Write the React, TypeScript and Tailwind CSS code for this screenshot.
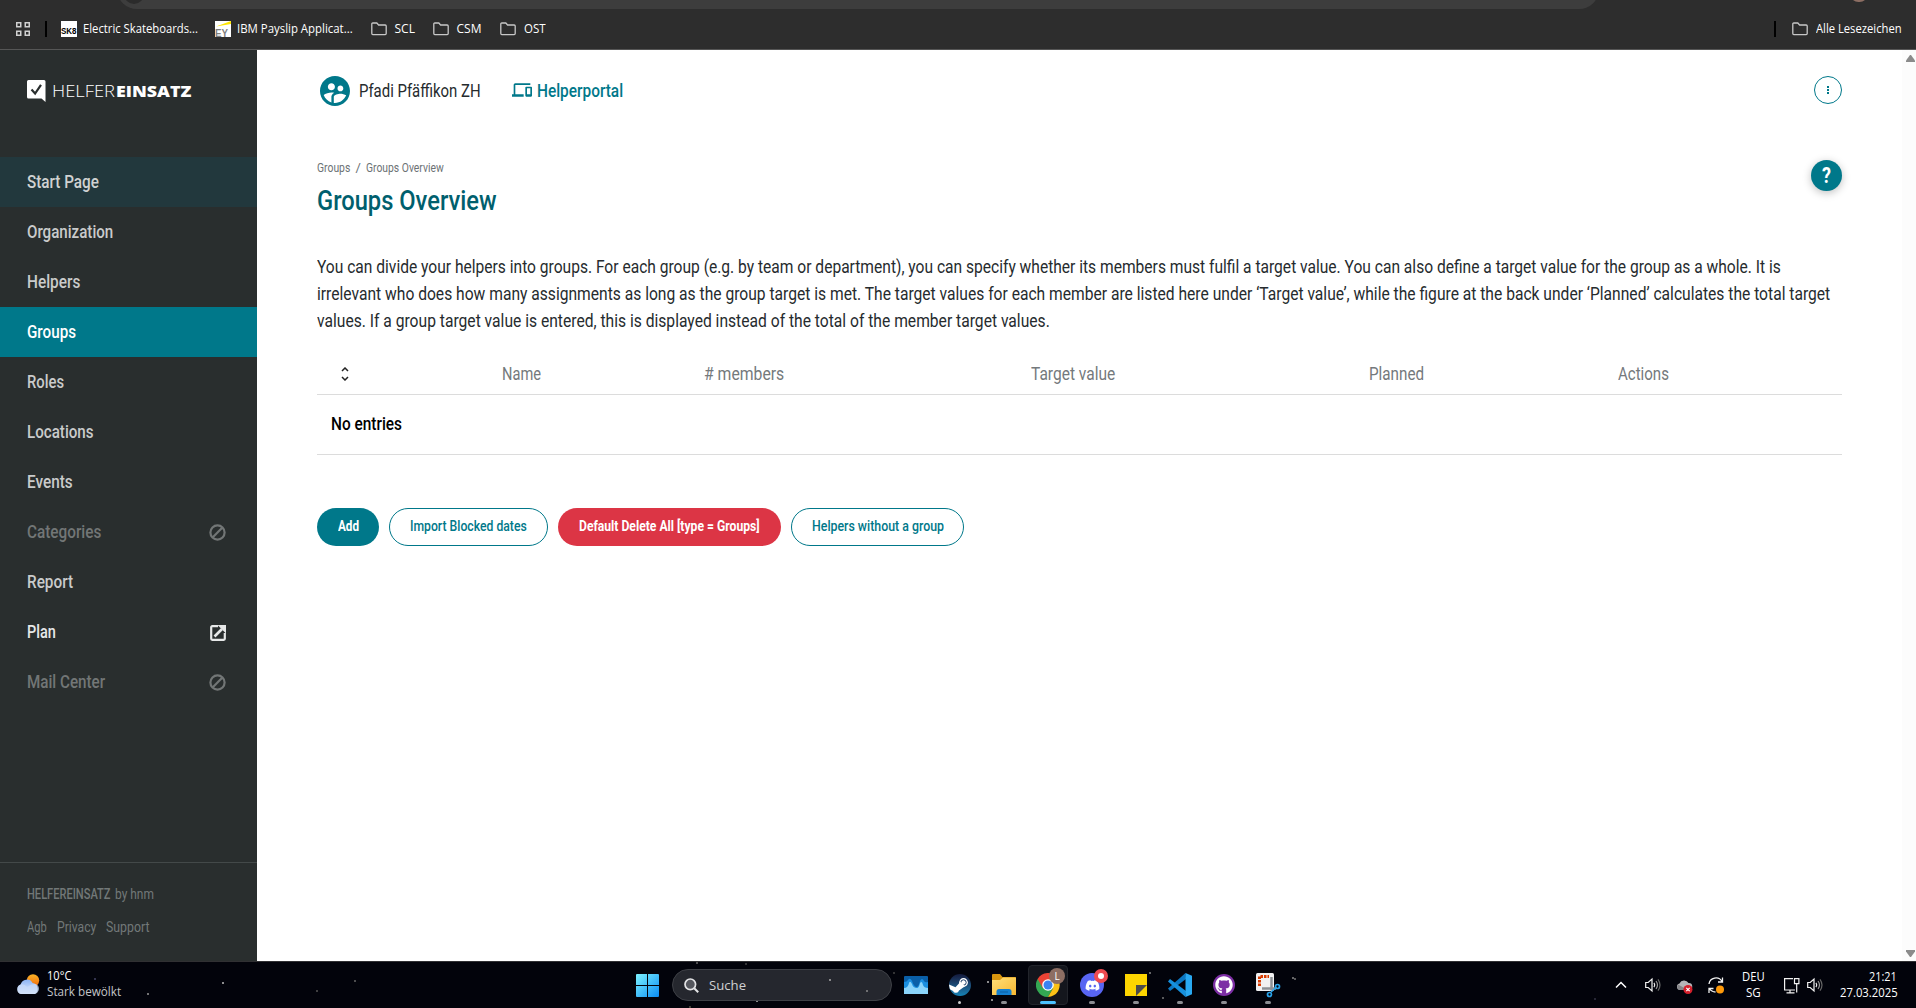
import { useLayoutEffect, useRef, useState, type ReactNode } from "react";
import { MdOutlineDevices, MdSupervisedUserCircle } from "react-icons/md";
import { FaDiscord, FaGithub } from "react-icons/fa6";

/* Condensed text: stretches its content horizontally to the given width. */
function Fit({ w, className = "", children }: { w: number; className?: string; children: ReactNode }) {
  const ref = useRef<HTMLSpanElement>(null);
  const [scale, setScale] = useState(1);
  useLayoutEffect(() => {
    if (ref.current) setScale(w / ref.current.offsetWidth);
  }, [w]);
  return (
    <span className={"block shrink-0 whitespace-nowrap " + className} style={{ width: w }}>
      <span ref={ref} className="inline-block origin-left whitespace-nowrap" style={{ transform: `scaleX(${scale})` }}>
        {children}
      </span>
    </span>
  );
}

function Folder() {
  return (
    <svg width="16" height="14" viewBox="0 0 16 14" fill="none" stroke="#c7c7c7" strokeWidth="1.3" className="shrink-0">
      <path d="M.8 11.6V2a1 1 0 0 1 1-1h4l1.8 2h6.6a1 1 0 0 1 1 1v7.6a1 1 0 0 1-1 1H1.8a1 1 0 0 1-1-1z" />
    </svg>
  );
}

function BrowserBar() {
  return (
    <header className="relative flex h-[50px] items-start overflow-hidden border-b border-[#565656] bg-[#2d2d2d] pt-[20px] font-['Open_Sans','Noto_Sans',sans-serif] text-[12px] leading-[18px] text-white">
      <div className="absolute -top-8 left-[117px] h-[41px] w-[1482px] rounded-[20px] bg-[#3d3d3d]" />
      <div className="absolute -top-4 left-[124px] h-[20px] w-[20px] rounded-full bg-[#2b2b2b]" />
      <div className="absolute -top-[15px] left-[1850px] h-[17px] w-[18px] rounded-full bg-[#8d6e63]" />
      <div className="flex h-[18px] w-full items-center pl-4">
        <svg width="14" height="14" viewBox="0 0 14 14" fill="none" stroke="#d0d0d0" strokeWidth="1.5">
          <rect x=".75" y=".75" width="4" height="4" />
          <rect x="9.25" y=".75" width="4" height="4" />
          <rect x=".75" y="9.25" width="4" height="4" />
          <rect x="9.25" y="9.25" width="4" height="4" />
        </svg>
        <div className="ml-[15px] h-4 w-[2px] bg-black" />
        <div className="ml-[14px] flex h-4 w-4 items-center justify-center overflow-hidden bg-white font-['Liberation_Sans',sans-serif] text-[9px] font-bold leading-4 text-black">
          <Fit w={16} className="pt-1 font-black">SK8</Fit>
        </div>
        <Fit w={114.5} className="ml-[6px]">Electric Skateboards...</Fit>
        <div className="relative ml-[17px] h-4 w-4 shrink-0 bg-white">
          <svg width="16" height="16" viewBox="0 0 16 16">
            <path d="M1 5.5 16 0v3z" fill="#ffe600" />
            <text x="0" y="15.5" fontSize="10.5" fontWeight="700" textLength="13" lengthAdjust="spacingAndGlyphs" fill="#808080" fontFamily="Liberation Sans">EY</text>
          </svg>
        </div>
        <Fit w={116} className="ml-[6px]">IBM Payslip Applicat...</Fit>
        <div className="ml-[18px]"><Folder /></div>
        <Fit w={20} className="ml-2">SCL</Fit>
        <div className="ml-[18px]"><Folder /></div>
        <Fit w={25} className="ml-2">CSM</Fit>
        <div className="ml-[18px]"><Folder /></div>
        <Fit w={22} className="ml-2">OST</Fit>
        <div className="ml-auto h-4 w-[2px] bg-black" />
        <div className="ml-4"><Folder /></div>
        <Fit w={86} className="ml-2 mr-[14px]">Alle Lesezeichen</Fit>
      </div>
    </header>
  );
}

type Item = { label: string; w: number; state?: "hover" | "active" | "disabled" | "external" };
const items: Item[] = [
  { label: "Start Page", w: 72, state: "hover" },
  { label: "Organization", w: 86.5 },
  { label: "Helpers", w: 53 },
  { label: "Groups", w: 49, state: "active" },
  { label: "Roles", w: 37 },
  { label: "Locations", w: 66.5 },
  { label: "Events", w: 46 },
  { label: "Categories", w: 74, state: "disabled" },
  { label: "Report", w: 46 },
  { label: "Plan", w: 29, state: "external" },
  { label: "Mail Center", w: 78.5, state: "disabled" },
];

function Sidebar() {
  const tone = (s?: string) =>
    s === "hover"
      ? "bg-[#22383d] text-[#d0d2d2]"
      : s === "active"
        ? "bg-[#00788a] text-white"
        : s === "disabled"
          ? "text-[#727676]"
          : s === "external"
            ? "text-[#e6e8e8]"
            : "text-[#c9cbcb]";
  return (
    <aside className="flex w-[257px] shrink-0 flex-col bg-[#292e2e] font-medium">
      <div className="flex h-[107px] items-start pl-[27px] pt-[30px] text-white">
        <svg width="19" height="22" viewBox="0 0 19 22" className="shrink-0">
          <path d="M1.5 0H17a1.5 1.5 0 0 1 1.5 1.5V22l-4-3.5h-13A1.5 1.5 0 0 1 0 17V1.5A1.5 1.5 0 0 1 1.5 0z" fill="#fff" />
          <path d="m4.500 9.500 3.600 4L14 4.800" fill="none" stroke="#292e2e" strokeWidth="2.200" />
        </svg>
        <div className="flex pl-[6px] font-['Open_Sans',sans-serif] text-[16px] leading-[22px]">
          <Fit w={63} className="font-light">HELFER</Fit>
          <Fit w={75.5} className="ml-px font-extrabold">EINSATZ</Fit>
        </div>
      </div>
      <nav>
        {items.map((i) => (
          <div key={i.label} className={"flex h-[50px] items-center justify-between pl-[27px] pr-[31px] text-[18px] " + tone(i.state)}>
            <Fit w={i.w} className="pb-[2px]">{i.label}</Fit>
            {i.state === "disabled" && (
              <svg width="17" height="17" viewBox="0 0 17 17" fill="none" stroke="currentColor" strokeWidth="2.2" className="mt-px">
                <circle cx="8.5" cy="8.5" r="7.1" />
                <path d="m3.8 13.2 9.4-9.4" />
              </svg>
            )}
            {i.state === "external" && (
              <svg width="16" height="16" viewBox="0 0 16 16" fill="none" stroke="currentColor" className="mt-px">
                <path d="M8 1.200H2.200a1 1 0 0 0-1 1v11.600a1 1 0 0 0 1 1h11.600a1 1 0 0 0 1-1V8" strokeWidth="2.200" />
                <path d="M4.500 11.500 12 4" strokeWidth="2.600" />
                <path d="M7.500 0H16v8.500z" fill="currentColor" stroke="none" />
              </svg>
            )}
          </div>
        ))}
      </nav>
      <div className="mt-auto flex h-[99px] flex-col gap-[13px] border-t border-[#434949] pl-[27px] pt-[21px] text-[15px] leading-5 text-[#727878]">
        <div className="flex gap-1">
          <Fit w={83.5}>HELFEREINSATZ</Fit>
          <Fit w={39} className="font-normal">by hnm</Fit>
        </div>
        <div className="flex gap-[10px] font-normal">
          <Fit w={20}>Agb</Fit>
          <Fit w={39}>Privacy</Fit>
          <Fit w={43.5}>Support</Fit>
        </div>
      </div>
    </aside>
  );
}

function Main() {
  return (
    <main className="min-w-0 flex-1 bg-white pl-[60px] pr-[60px] text-[18px] text-[#262b2e]">
      <div className="flex h-[82px] items-center">
        <MdSupervisedUserCircle className="size-[36px] shrink-0 text-[#00788a]" />
        <Fit w={122} className="ml-[6px] pb-[2px]">Pfadi Pfäffikon ZH</Fit>
        <div className="ml-[31px] flex items-center pb-[2px] text-[#00788a]">
          <MdOutlineDevices className="size-[20px] shrink-0" />
          <Fit w={86.5} className="ml-[5px] font-medium">Helperportal</Fit>
        </div>
        <div className="mb-[2px] ml-auto flex size-7 flex-col items-center justify-center gap-[1px] rounded-full border border-[#00788a]">
          <i className="size-[2px] bg-[#00788a]" />
          <i className="size-[2px] bg-[#00788a]" />
          <i className="size-[2px] bg-[#00788a]" />
        </div>
      </div>
      <div className="flex h-[116px] justify-between pt-[26px]">
        <div>
          <div className="flex gap-[5px] text-[13px] leading-5 text-[#6c7275]">
            <Fit w={33.5}>Groups</Fit>
            <Fit w={5}>/</Fit>
            <Fit w={78}>Groups Overview</Fit>
          </div>
          <Fit w={180} className="mt-[6px] text-[27px] font-medium leading-[34px] text-[#005f6e]">Groups Overview</Fit>
        </div>
        <div className="mt-[2px] flex size-[31px] items-center justify-center rounded-full bg-[#00788a] text-[22px] font-bold leading-none text-white shadow-[0_2px_8px_rgba(0,0,0,0.25)]">
          <Fit w={9}>?</Fit>
        </div>
      </div>
      <div className="pt-[5px] leading-[27px]">
        <Fit w={1464}>You can divide your helpers into groups. For each group (e.g. by team or department), you can specify whether its members must fulfil a target value. You can also define a target value for the group as a whole. It is</Fit>
        <Fit w={1513}>irrelevant who does how many assignments as long as the group target is met. The target values for each member are listed here under ‘Target value’, while the figure at the back under ‘Planned’ calculates the total target</Fit>
        <Fit w={733}>values. If a group target value is entered, this is displayed instead of the total of the member target values.</Fit>
      </div>
      <div className="mt-[20px] grid h-[41px] w-[1525px] grid-cols-[56px_297px_149px_508px_139px_355px] items-center justify-items-center border-b border-[#dcdcdc] text-[#74797c]">
        <svg width="8" height="14" viewBox="0 0 8 14" fill="none" stroke="#222" strokeWidth="1.5">
          <path d="M1 4 4 1l3 3M1 10l3 3 3-3" />
        </svg>
        <Fit w={39} className="pb-[2px]">Name</Fit>
        <Fit w={80.5} className="pb-[2px]">#&nbsp;members</Fit>
        <Fit w={84.5} className="pb-[2px]">Target value</Fit>
        <Fit w={55} className="pb-[2px]">Planned</Fit>
        <Fit w={51} className="pb-[2px]">Actions</Fit>
      </div>
      <div className="flex h-[60px] w-[1525px] items-center border-b border-[#dcdcdc] pb-[2px] pl-[14px] font-medium text-black">
        <Fit w={71}>No entries</Fit>
      </div>
      <div className="mt-[53px] flex gap-[10px] text-[14.5px] font-medium text-[#00788a]">
        <button className="flex h-[38px] w-[62px] items-center justify-center rounded-full bg-[#00788a] font-bold text-white"><Fit w={21}>Add</Fit></button>
        <button className="flex h-[38px] w-[159px] items-center justify-center rounded-full border border-[#00788a]"><Fit w={117}>Import Blocked dates</Fit></button>
        <button className="flex h-[38px] w-[223px] items-center justify-center rounded-full bg-[#dc3545] font-bold text-white"><Fit w={181}>Default Delete All [type = Groups]</Fit></button>
        <button className="flex h-[38px] w-[173px] items-center justify-center rounded-full border border-[#00788a]"><Fit w={132}>Helpers without a group</Fit></button>
      </div>
    </main>
  );
}

function Scrollbar() {
  return (
    <div className="flex w-[14px] shrink-0 flex-col items-center justify-between bg-[#fcfcfc] pb-1 pl-[2px] pt-[5px]">
      <svg width="9" height="7" viewBox="0 0 9 7"><path d="M4 0h1l4 5.500V7H0V5.500z" fill="#8b8b8b" /></svg>
      <svg width="9" height="7" viewBox="0 0 9 7"><path d="M4 7h1l4-5.500V0H0v1.500z" fill="#8b8b8b" /></svg>
    </div>
  );
}

const stars: [number, number, string][] = [
  [147, 31, "#999"], [222, 20, "#bbb"], [94, 16, "#446"], [316, 28, "#555"], [354, 18, "#666"],
  [696, 0, "#666"], [745, 1, "#444"], [756, 38, "#bbb"], [893, 10, "#444"],
  [987, 19, "#bbb"], [991, 37, "#bbb"], [1149, 10, "#888"], [1162, 35, "#777"], [1292, 15, "#888"], [1294, 16, "#777"], [1594, 36, "#334"], [689, 44, "#554"],
];

function Speaker() {
  return (
    <svg width="16" height="16" viewBox="0 0 16 16" fill="none" stroke="#f2f2f2" strokeWidth="1.200">
      <path d="M.7 5.500h2.500L7 2v12l-3.800-3.500H.7z" />
      <path d="M9 5.800q1.500 2.200 0 4.400" />
      <path d="M11 4q3 4 0 8" stroke="#9a9a9a" />
      <path d="M13 2.300q4 5.700 0 11.400" stroke="#666" />
    </svg>
  );
}

function TaskIcon({ children, run, active }: { children: ReactNode; run?: boolean; active?: boolean }) {
  return (
    <div className={"relative flex h-10 w-10 items-center justify-center rounded " + (active ? "border border-[#22242b] bg-[#14161d]" : "")}>
      {children}
      {run && <i className="absolute bottom-[1px] left-[17px] h-[3px] w-[6px] rounded-full bg-[#8b8d92]" />}
      {active && <i className="absolute bottom-0 left-[11px] h-[3px] w-4 rounded-full bg-[#4cc2ff]" />}
    </div>
  );
}

function Taskbar() {
  return (
    <footer className="relative flex h-[47px] items-start border-t border-[#303033] bg-[#02030b] font-['Open_Sans','Noto_Sans',sans-serif] text-[12px] text-white">
      {stars.map(([x, y, c]) => (
        <i key={`${x}-${y}`} className="absolute size-[2px] rounded-full" style={{ left: x, top: y, background: c }} />
      ))}
      <div className="flex w-[636px] items-center pl-4 pt-[7px]">
        <svg width="24" height="21" viewBox="0 0 24 21">
          <defs>
            <linearGradient id="cl" x1="0" y1="0" x2="0" y2="1"><stop offset="0" stopColor="#8db4f4" /><stop offset="1" stopColor="#e6effd" /></linearGradient>
            <linearGradient id="sun" x1="0" y1="0" x2="0" y2="1"><stop offset="0" stopColor="#fbb325" /><stop offset="1" stopColor="#f0690f" /></linearGradient>
          </defs>
          <circle cx="17" cy="6.500" r="6.200" fill="url(#sun)" />
          <path d="M5 20a5 5 0 0 1-.4-9.500 6.500 6.500 0 0 1 12-1.500A6 6 0 0 1 19 20z" fill="url(#cl)" />
          <path d="M5 20a5 5 0 0 1-.4-9.500q4-.8 6.500 2.500Q18 8 22 11.500A5.600 5.600 0 0 1 19 20z" fill="#c9dbfa" opacity=".7" />
        </svg>
        <div className="-mt-px ml-[7px] leading-4">
          <Fit w={24}>10°C</Fit>
          <Fit w={74} className="text-[#c4c5c8]">Stark bewölkt</Fit>
        </div>
      </div>
      <svg width="23" height="23" viewBox="0 0 23 23" className="mt-3">
        <defs><linearGradient id="win" x1="0" y1="0" x2="1" y2="1"><stop offset="0" stopColor="#7df3ff" /><stop offset="1" stopColor="#0a8cf5" /></linearGradient></defs>
        <path d="M0 1q0-1 1-1h10v11H0zM12 0h10q1 0 1 1v10H12zM0 12h11v11H1q-1 0-1-1zM12 12h11v10q0 1-1 1H12z" fill="url(#win)" />
      </svg>
      <div className="relative ml-[13px] mt-[7px] flex h-8 w-[220px] items-center rounded-full border border-[#3e4046] bg-[#25272e] pl-[11px] text-[13.5px] text-[#d0d1d3]">
        <svg width="15" height="15" viewBox="0 0 15 15" fill="none" stroke="#e4e4e6"><circle cx="6.300" cy="6.300" r="5.300" strokeWidth="1.700" fill="#55575e" /><path d="m10.200 10.200 4 4" strokeWidth="2" /></svg>
        <Fit w={37} className="ml-[10px]">Suche</Fit>
        <i className="absolute left-[156px] top-[9px] size-[2px] rounded-full bg-[#aaa]" />
        <i className="absolute left-[193px] top-[20px] size-[2px] rounded-full bg-[#888]" />
      </div>
      <div className="ml-1 mt-[3px] flex gap-1">
        <TaskIcon>
          <svg width="24" height="18" viewBox="0 0 24 18">
            <rect width="24" height="18" rx="1" fill="#0a5fa8" />
            <path d="M0 6q3 0 4-2 2-3 4 1 2 6 5 6 2-1 3-6 2-4 4 0 1 2 4 1v12H0z" fill="#1b8fe0" />
            <path d="M0 12q4 0 5-5 1-3 3 1 1 4 5 4 2 0 3-5 2-3 3 2 1 3 5 3v6H0z" fill="#8ad4fb" />
          </svg>
        </TaskIcon>
      </div>
      <div className="ml-1 mt-[3px] flex gap-1">
        <TaskIcon>
          <div className="flex size-[22px] items-center justify-center overflow-hidden rounded-full bg-linear-to-b from-[#131a3c] to-[#1283b7]">
            <svg width="22" height="22" viewBox="0 0 22 22">
              <circle cx="14.500" cy="8.500" r="4.400" fill="#fff" /><circle cx="14.500" cy="8.500" r="2.700" fill="none" stroke="#1b3c66" strokeWidth="1" />
              <path d="m0 10.500 6.500 2.800 5-5.500 4.500 4.500-6 4.200a3.200 3.200 0 0 1-6 .5L.5 15z" fill="#fff" />
            </svg>
          </div>
          <i className="absolute bottom-[1px] left-[18px] size-[3px] rounded-full bg-[#ccc]" />
        </TaskIcon>
        <TaskIcon run>
          <svg width="24" height="22" viewBox="0 0 24 22">
            <defs><linearGradient id="fo" x1="0" y1="0" x2="1" y2="1"><stop offset="0" stopColor="#ffe07a" /><stop offset="1" stopColor="#f7b731" /></linearGradient></defs>
            <path d="M0 1q0-1 1-1h7l2.500 3H23q1 0 1 1v4H0z" fill="#d9960f" />
            <path d="M0 6h8l3-2.500h13V21H0z" fill="url(#fo)" />
            <path d="M4.500 21v-3.500q0-2.500 2.500-2.500h10q2.500 0 2.500 2.500V21z" fill="#1480d0" /><path d="M8 18h8" stroke="#0b5ea3" strokeWidth="1" />
          </svg>
        </TaskIcon>
        <TaskIcon active>
          <svg width="24" height="24" viewBox="0 0 24 24">
            <path d="M12 12 1.600 6A12 12 0 0 1 22.400 6z" fill="#ea4335" />
            <path d="M12 12 1.600 6A12 12 0 0 0 12 24l5.200-9z" fill="#34a853" />
            <path d="m17.200 15-5.200 9A12 12 0 0 0 22.400 6.500H12z" fill="#fbc116" />
            <path d="M1.600 6 6.800 15 12 6.500h10.300L22 5.500z" fill="#ea4335" />
            <circle cx="12" cy="12" r="5.800" fill="#fff" /><circle cx="12" cy="12" r="4.500" fill="#3b82f0" />
          </svg>
          <div className="absolute left-[20px] top-[2px] flex size-4 items-center justify-center rounded-full bg-[#8d6e63] text-[10px] leading-none text-white">L</div>
        </TaskIcon>
        <TaskIcon run>
          <div className="flex size-6 items-center justify-center rounded-full bg-[#5865f2]"><FaDiscord className="size-[15px]" /></div>
          <div className="absolute left-[22px] top-[4px] flex size-[14px] items-center justify-center rounded-full bg-[#f04b50]"><i className="size-[6px] rounded-full bg-white" /></div>
        </TaskIcon>
        <TaskIcon run>
          <svg width="22" height="22" viewBox="0 0 22 22"><path d="M0 0h22v22H0z" fill="#fdd500" /><path d="M11 11h11L11 22z" fill="#4b4b4b" /></svg>
        </TaskIcon>
        <TaskIcon run>
          <svg width="24" height="24" viewBox="0 0 24 24">
            <path d="M17.500 0 0 15.500l2 2.500L18 6z" fill="#0b77c2" />
            <path d="M17.500 24 0 8.500 2 6l16 12z" fill="#1690dd" />
            <path d="M17.500 0 24 2.800v18.400L17.500 24z" fill="#29a9f2" />
          </svg>
        </TaskIcon>
        <TaskIcon run>
          <div className="flex size-[22px] items-center justify-center rounded-full bg-[#7d2fa5]"><FaGithub className="size-[18px]" /></div>
        </TaskIcon>
        <TaskIcon run>
          <svg width="24" height="24" viewBox="0 0 24 24" className="overflow-visible">
            <rect width="18" height="18" rx="1.500" fill="#f1f1f2" />
            <path d="M3.500 13V3.500H13" fill="none" stroke="#d83b01" strokeWidth="3" strokeDasharray="2.500 1" />
            <path d="M15.500 4v13.500M6 15.500h14" stroke="#8d9196" strokeWidth="2.500" fill="none" />
            <circle cx="21.500" cy="13.500" r="2" fill="none" stroke="#29a3ea" strokeWidth="1.700" /><circle cx="13.500" cy="21.500" r="2" fill="none" stroke="#29a3ea" strokeWidth="1.700" />
            <path d="m15 19 4.500-4" stroke="#29a3ea" strokeWidth="1.500" />
          </svg>
        </TaskIcon>
      </div>
      <div className="ml-auto flex h-[46px] items-center pr-[19px] leading-4">
        <svg width="12" height="8" viewBox="0 0 12 8" fill="none" stroke="#fff" strokeWidth="1.500" className="mr-[18px]"><path d="m1 6.500 5-5 5 5" /></svg>
        <Speaker />
        <svg width="17" height="16" viewBox="0 0 17 16" className="ml-[15px] mt-px">
          <path d="M4 12a3.300 3.300 0 0 1-.5-6.500A5 5 0 0 1 12.500 5 3.500 3.500 0 0 1 13 12z" fill="#b5b5b8" />
          <path d="M2 6.500 12 12H4a3.500 3.500 0 0 1-2-5.500z" fill="#858589" />
          <circle cx="12" cy="11.500" r="4.500" fill="#d5202c" /><path d="m10.300 9.800 3.400 3.400m0-3.400-3.400 3.400" stroke="#fff" strokeWidth="1.200" />
        </svg>
        <svg width="16" height="17" viewBox="0 0 16 17" className="ml-[15px]" fill="none" stroke="#f2f2f2" strokeWidth="1.300">
          <path d="M1 7a7 7 0 0 1 13-2.500M14.500.5v4.500H10M7.500 15A7 7 0 0 1 1.500 11.500M1 16v-4.500h4.500" />
          <circle cx="12" cy="12.500" r="4" fill="#ff9a0a" stroke="none" />
        </svg>
        <div className="ml-[18px] flex w-[24px] flex-col items-center">
          <Fit w={22.5}>DEU</Fit>
          <Fit w={14.5}>SG</Fit>
        </div>
        <svg width="17" height="17" viewBox="0 0 17 17" className="ml-[17px]" fill="none" stroke="#f2f2f2" strokeWidth="1.200">
          <path d="M10 1.600H1.600v11.400H12M7 13v2.500M3.500 15.800h8" /><path d="M11.500 1.600h4.400v5h-4.400zM13.700 6.600v9" />
        </svg>
        <div className="ml-[7px]"><Speaker /></div>
        <div className="ml-[17px] flex flex-col items-end">
          <Fit w={28}>21:21</Fit>
          <Fit w={57.5}>27.03.2025</Fit>
        </div>
      </div>
    </footer>
  );
}

export default function App() {
  return (
    <div className="flex h-[1008px] w-[1916px] flex-col overflow-hidden bg-white">
      <BrowserBar />
      <div className="flex min-h-0 flex-1 font-[Roboto,sans-serif]">
        <Sidebar />
        <Main />
        <Scrollbar />
      </div>
      <Taskbar />
    </div>
  );
}
